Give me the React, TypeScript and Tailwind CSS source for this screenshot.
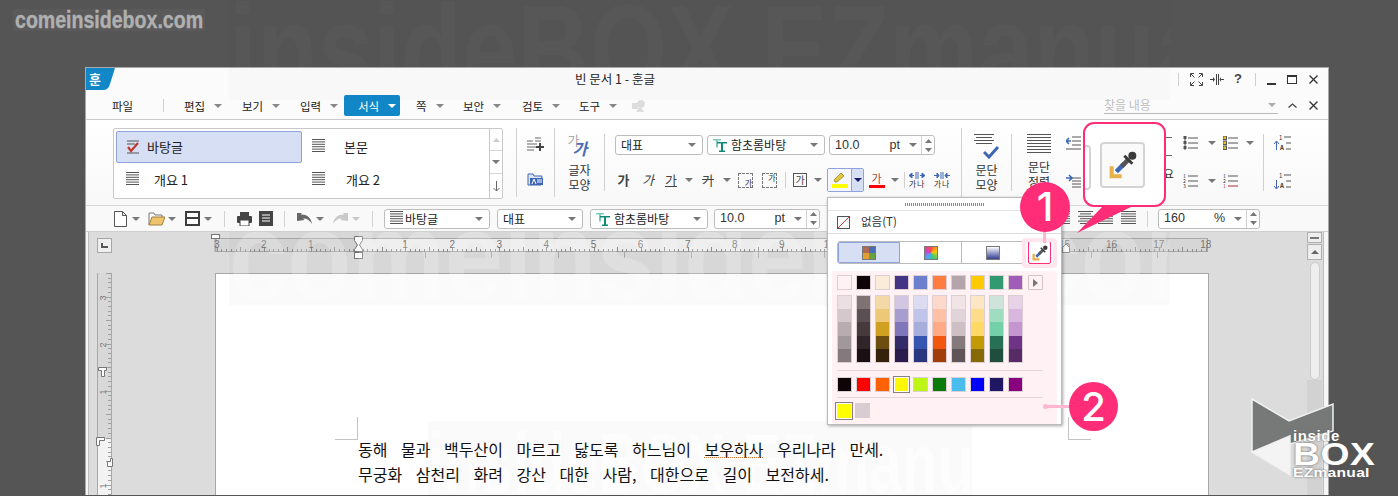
import React from "react";

const Caret = ({ c = "#777777" }: { c?: string }) => (
  <svg width="8" height="4" viewBox="0 0 8 4" className="shrink-0"><path d="M0 0h8L4 4z" fill={c} /></svg>
);
const Slot = ({ w, children }: { w: string; children?: React.ReactNode }) => (
  <div className={`${w} flex shrink-0 items-center justify-center`}>{children}</div>
);
const VSep = ({ h = "h-[16px]", c = "bg-[#d0d0d0]" }: { h?: string; c?: string }) => (
  <div className={`${h} ${c} w-px shrink-0`} />
);
const Lines = ({ w = 14, n = 6, gap = 2.4, c = "#555555", stagger = false }: { w?: number; n?: number; gap?: number; c?: string; stagger?: boolean }) => (
  <svg width={w} height={n * gap + 1} className="shrink-0">
    {Array.from({ length: n }).map((_, i) => (
      <line key={i} x1={stagger && i % 2 ? 2 : 0} x2={stagger && i % 2 ? w - 2 : w} y1={i * gap + 0.5} y2={i * gap + 0.5} stroke={c} strokeWidth="1" />
    ))}
  </svg>
);
const Dropper = ({ s = 24 }: { s?: number }) => (
  <svg width={s} height={s} viewBox="0 0 24 24">
    <path d="M2 13h3v6h6v3H2z" fill="#e6b04a" />
    <line x1="7" y1="17" x2="13" y2="11" stroke="#3e66b4" strokeWidth="3.4" />
    <line x1="11" y1="13" x2="16" y2="8" stroke="#555555" strokeWidth="3.6" />
    <line x1="13" y1="5" x2="19" y2="11" stroke="#3a3a3a" strokeWidth="2.2" />
    <circle cx="19" cy="5" r="3" fill="#3a3a3a" />
  </svg>
);
const FontT = () => (
  <svg width="14" height="14" viewBox="0 0 14 14" className="shrink-0">
    <path d="M0 1h8v1.600H5v7H3v-7H0z" fill="#7fc9b8" />
    <path d="M4 4h10v1.600h-4v6.800h2V14H6v-1.600h2V5.600H4z" fill="#118a78" />
  </svg>
);
const Select = ({ w, children }: { w: string; children: React.ReactNode }) => (
  <div className={`${w} flex h-[20px] shrink-0 items-center rounded-[3px] border border-[#bdbdbd] bg-white pl-[5px] pr-[6px] text-[12px] text-[#222222]`}>
    {children}
    <span className="ml-auto flex"><Caret /></span>
  </div>
);
const SizeBox = ({ w, val, unit }: { w: string; val: string; unit: string }) => (
  <div className={`${w} flex h-[20px] shrink-0 items-center rounded-[3px] border border-[#bdbdbd] bg-white pl-[5px] text-[12.5px] text-[#333333] [font-family:'Liberation_Sans',sans-serif]`}>
    <span>{val}</span>
    <span className="ml-auto">{unit}</span>
    <span className="ml-[9px] flex"><Caret /></span>
    <div className="ml-[4px] flex h-full w-[13px] flex-col items-center justify-center gap-[5px] border-l border-[#d0d0d0]">
      <svg width="7" height="4"><path d="M0 4L3.500 0 7 4z" fill="#777777" /></svg>
      <svg width="7" height="4"><path d="M0 0h7L3.500 4z" fill="#777777" /></svg>
    </div>
  </div>
);
const MenuItem = ({ w, t }: { w: string; t: string }) => (
  <div className={`${w} flex shrink-0 items-center text-[#222222]`}>
    <span>{t}</span>
    <span className="ml-[9px] flex"><Caret c="#888888" /></span>
  </div>
);
const GaStack = ({ a, b }: { a: string; b: string }) => (
  <div className="flex flex-col items-center gap-[3px] text-[12px] leading-[12px] text-[#333333]">
    <span>{a}</span><span>{b}</span>
  </div>
);
const DashedGa = ({ top }: { top?: boolean }) => (
  <div className={`flex h-[15px] w-[15px] border border-dashed border-[#777777] ${top ? "items-start justify-end" : "items-end justify-end"}`}>
    <span className="text-[8px] leading-[8px] text-[#333333]">가</span>
  </div>
);
const SpacingIcon = ({ narrow }: { narrow?: boolean }) => (
  <div className="flex flex-col items-center">
    <svg width="16" height="7" viewBox="0 0 16 7">
      {narrow ? (
        <path d="M0 3.500h3M3 1v5l2-2.500zM13 1v5l-2-2.500zM13 3.500h3M7 0v7M9 0v7" stroke="#3e66b4" fill="#3e66b4" strokeWidth="1" />
      ) : (
        <path d="M0 3.500h5M3 1l-3 2.500 3 2.500zM16 3.500h-5M13 1l3 2.500-3 2.500zM7 0v7M9 0v7" stroke="#3e66b4" fill="#3e66b4" strokeWidth="1" />
      )}
    </svg>
    <span className="mt-[1px] text-[8px] leading-[8px] tracking-[1px] text-[#333333]">가나</span>
  </div>
);

const hSwatches = ["#fff2f5", "#0e0306", "#faecd9", "#443484", "#6b7fce", "#ff7c40", "#b3a5aa", "#ffcb00", "#339970", "#a05cb7"];
const columns = [
  ["#ecdfe3", "#d5c8cc", "#b9acb0", "#a0989b", "#847a7e"],
  ["#7e7275", "#5a4f52", "#463a3d", "#302528", "#1a1013"],
  ["#f4d9a8", "#ecc877", "#d0a020", "#6b4e10", "#35220c"],
  ["#d2c6e2", "#a79dcf", "#8076bb", "#332c68", "#2a1c4c"],
  ["#dcdcf0", "#c0c4e8", "#a6aedc", "#3655b0", "#2a367e"],
  ["#fdd9cb", "#ffc0a6", "#ffa985", "#f0560d", "#a23c0b"],
  ["#f0e4e6", "#e0d4d8", "#ccc0c4", "#847a7c", "#605458"],
  ["#fde6c4", "#fddc8a", "#ffd866", "#c29a05", "#866a08"],
  ["#cee4da", "#a0dcc0", "#74d0a8", "#287055", "#1f4e3e"],
  ["#e8d2e8", "#d9b6df", "#c495d0", "#6f3388", "#582a66"],
];
const stdColors = ["#0e0306", "#ff0000", "#ff6105", "#fff700", "#bdf516", "#0b7a08", "#4abcee", "#0000ff", "#1f1664", "#880080"];

const HRuler = () => {
  const unit = 47.1;
  const ticks = Array.from({ length: 211 }).map((_, i) => i);
  const labels: [string, number][] = [["3", -3], ["2", -2], ["1", -1]];
  for (let i = 1; i <= 18; i++) labels.push([String(i), i]);
  return (
    <svg width="994" height="30" className="shrink-0 overflow-visible" viewBox="0 0 994 30">
      <rect x="0" y="1" width="992" height="13" fill="#d6d6d6" />
      <rect x="143" y="1" width="708" height="13" fill="#f1f1f1" />
      <line x1="0" x2="992" y1="0.500" y2="0.500" stroke="#a8a8a8" />
      <line x1="0" x2="992" y1="13.500" y2="13.500" stroke="#a8a8a8" />
      <line x1="0.500" x2="0.500" y1="0" y2="14" stroke="#a8a8a8" strokeWidth="2" />
      <line x1="992.500" x2="992.500" y1="0" y2="14" stroke="#a8a8a8" />
      {ticks.map((i) => {
        const x = Math.round(143 + (i - 30) * (unit / 10)) + 0.5;
        return <line key={i} x1={x} x2={x} y1={i % 5 === 0 ? 9 : 11} y2="14" stroke="#909090" />;
      })}
      {labels.map(([t, n]) => (
        <text key={t + n} x={143 + n * unit} y="10" textAnchor="middle" fontSize="10" fill="#777777" fontFamily="Liberation Sans, sans-serif">{t}</text>
      ))}
      {Array.from({ length: 12 }).map((_, i) => {
        const x = Math.round(143 + 66.6 * (i + 1)) + 0.5;
        return <line key={i} x1={x} x2={x} y1="14" y2="20" stroke="#a8a8a8" />;
      })}
      <rect x="-3.500" y="-3.500" width="8" height="4" fill="#ffffff" stroke="#777777" />
      <path d="M139.500-1.500h8v4l-3 4.500 3 4.500v2h-8v-2l3-4.500-3-4.500z" fill="#ffffff" stroke="#777777" />
      <rect x="139.500" y="14.500" width="8" height="6" fill="#ffffff" stroke="#777777" />
      <path d="M847.500 18.500v-5l3.500-3.500 3.500 3.500v5z" fill="#ffffff" stroke="#777777" transform="translate(0,-4)" />
    </svg>
  );
};

const VRuler = () => {
  const unit = 47;
  return (
    <svg width="15" height="222" viewBox="0 0 15 222" className="shrink-0 overflow-visible">
      <rect x="1" y="0" width="13" height="166" fill="#d8d8d8" />
      <rect x="1" y="166" width="13" height="56" fill="#f3f3f3" />
      <line x1="0.500" x2="0.500" y1="0" y2="222" stroke="#a8a8a8" />
      <line x1="14.500" x2="14.500" y1="0" y2="222" stroke="#a8a8a8" />
      {Array.from({ length: 48 }).map((_, i) => {
        const y = Math.round(i * (unit / 10)) + 0.5;
        return <line key={i} x1={(i - 25) % 5 === 0 ? 9 : 11} x2="14" y1={y} y2={y} stroke="#a0a0a0" />;
      })}
      {[["3", 25], ["2", 72], ["1", 119], ["1", 213]].map(([t, y]) => (
        <text key={String(y)} x="0" y="0" transform={`translate(9,${y}) rotate(-90)`} textAnchor="middle" fontSize="9" fill="#777777" fontFamily="Liberation Sans, sans-serif">{t}</text>
      ))}
      <path d="M1.500 94.500h8v3h-2v6h-3v-6h-3z" fill="#ffffff" stroke="#777777" />
      <path d="M-0.500 164.500h8v3h-5v5h-3z" fill="#ffffff" stroke="#777777" />
      <path d="M8.500 194.500v-5h3v-3h2v8z" fill="#ffffff" stroke="#777777" transform="translate(2,-1)" />
    </svg>
  );
};

export default function App() {
  return (
    <div className="relative h-[496px] w-[1398px] overflow-hidden bg-[#555555] pl-[85px] pt-[67px] text-[12px] [font-family:'Noto_Sans_CJK_KR','Noto_Sans',sans-serif]">
      {/* window */}
      <div className="flex h-[428px] w-[1244px] flex-col border border-b-0 border-[#a9a9a9] bg-[#fbfbfb]">
        {/* title bar */}
        <div className="flex h-[25px] shrink-0 items-start">
          <svg width="29" height="22" viewBox="0 0 29 22" className="shrink-0">
            <path d="M0 0h29l-5 16q-1.500 6-7 6H0z" fill="#1287c8" />
            <text x="9" y="16" textAnchor="middle" fontSize="13" fontWeight="700" fill="#ffffff">훈</text>
          </svg>
          <span className="ml-[460px] mt-[3px] text-[12.5px] leading-[16px] text-[#222222]">빈 문서 1 - 훈글</span>
          <div className="ml-auto flex items-center pt-[4px]">
            <VSep h="h-[13px]" />
            <Slot w="w-[34px]">
              <svg width="13" height="13" viewBox="0 0 13 13" fill="none" stroke="#444444"><path d="M.5 4V.5H4M9 .5h3.500V4M12.500 9v3.500H9M4 12.500H.5V9M1 1l3.500 3.500M12 1L8.500 4.500M12 12L8.500 8.500M1 12l3.500-3.500" /></svg>
            </Slot>
            <Slot w="w-[8px]">
              <svg width="14" height="11" viewBox="0 0 14 11" className="shrink-0" fill="#444444"><path d="M6 0h1v11H6zM8 0h1v11H8zM0 5h3V3l2 2.500L3 8V6H0zM14 5h-3V3L9.500 5.500 11 8V6h3z" /></svg>
            </Slot>
            <Slot w="w-[34px]"><span className="text-[13px] font-bold leading-[14px] text-[#444444] [font-family:'Liberation_Sans',sans-serif]">?</span></Slot>
            <VSep h="h-[13px]" />
            <Slot w="w-[30px]"><div className="mt-[9px] h-[2px] w-[9px] bg-[#333333]" /></Slot>
            <Slot w="w-[12px]"><div className="h-[9px] w-[10px] shrink-0 border border-t-2 border-[#333333]" /></Slot>
            <Slot w="w-[30px]">
              <svg width="9" height="9" fill="none" stroke="#333333" strokeWidth="1.300"><path d="M.5.5l8 8M8.500.5l-8 8" /></svg>
            </Slot>
          </div>
        </div>

        {/* menu row */}
        <div className="flex h-[27px] shrink-0 items-center border-b border-[#cacaca] pb-[1px] pl-[26px] text-[11.5px] leading-[14px] text-[#222222]">
          <span className="w-[51px] shrink-0">파일</span>
          <VSep h="h-[13px]" />
          <div className="w-[20px] shrink-0" />
          <MenuItem w="w-[58px]" t="편집" />
          <MenuItem w="w-[58px]" t="보기" />
          <MenuItem w="w-[44px]" t="입력" />
          <div className="flex h-[21px] w-[56px] shrink-0 items-center rounded-[2px] bg-[#1287c8] pl-[14px] text-white">
            <span>서식</span><span className="ml-[9px] flex"><Caret c="#ffffff" /></span>
          </div>
          <div className="w-[16px] shrink-0" />
          <MenuItem w="w-[47px]" t="쪽" />
          <MenuItem w="w-[59px]" t="보안" />
          <MenuItem w="w-[57px]" t="검토" />
          <MenuItem w="w-[53px]" t="도구" />
          <svg width="14" height="12" viewBox="0 0 14 12" className="shrink-0" fill="#dddddd"><path d="M0 3l6 0v6H0zM9 0a4 4 0 1 1-.1 0zM4 12l4-6 4 6z" /></svg>
          <div className="ml-[458px] flex h-[17px] w-[174px] shrink-0 items-center border-b border-[#bbbbbb] text-[12px] text-[#bfbfbf]">
            <span>찾을 내용</span>
            <span className="ml-auto mr-[2px] flex"><Caret c="#aaaaaa" /></span>
          </div>
          <Slot w="w-[28px]">
            <svg width="9" height="5" fill="none" stroke="#444444" strokeWidth="1.300"><path d="M.5 4.500L4.500 1l4 3.500" /></svg>
          </Slot>
          <Slot w="w-[14px]">
            <svg width="9" height="9" className="shrink-0" fill="none" stroke="#333333" strokeWidth="1.300"><path d="M.5.5l8 8M8.500.5l-8 8" /></svg>
          </Slot>
        </div>

        {/* ribbon */}
        <div className="relative z-10 flex h-[86px] shrink-0 items-stretch border-b border-[#d6d6d6] bg-gradient-to-b from-white to-[#f8f8f8] pl-[27px]">
          {/* style gallery */}
          <div className="mt-[8px] flex h-[71px] w-[390px] shrink-0 rounded-[2px] border border-[#c8c8c8] bg-white">
            <div className="grid w-[376px] grid-cols-[189px_1fr] grid-rows-[32px_33px] p-[2px] text-[13px] leading-[16px] text-[#222222]">
              <div className="flex w-[186px] items-center rounded-[2px] border border-[#8ea2dc] bg-[#d6dff3] pl-[9px]">
                <svg width="14" height="14" viewBox="0 0 14 14" className="shrink-0" fill="none"><path d="M1 1h12M1 4h8M1 13h12" stroke="#555555" /><path d="M2 7l3 4 7-8" stroke="#c0392b" strokeWidth="2.200" /></svg>
                <span className="ml-[7px]">바탕글</span>
              </div>
              <div className="flex items-center pl-[7px]"><Lines w={13} n={6} /><span className="ml-[19px]">본문</span></div>
              <div className="flex items-center pl-[10px]"><Lines w={13} n={6} /><span className="ml-[15px]">개요 1</span></div>
              <div className="flex items-center pl-[7px]"><Lines w={13} n={6} /><span className="ml-[21px]">개요 2</span></div>
            </div>
            <div className="flex w-[13px] flex-col border-l border-[#c8c8c8]">
              <div className="flex h-[22px] items-center justify-center border-b border-[#d6d6d6]"><svg width="7" height="4"><path d="M0 4L3.500 0 7 4z" fill="#cccccc" /></svg></div>
              <div className="flex h-[23px] items-center justify-center border-b border-[#d6d6d6]"><Caret /></div>
              <div className="flex flex-1 items-center justify-center">
                <svg width="7" height="11" fill="none" stroke="#666666"><path d="M3.500 0v10M.5 7l3 3 3-3" /></svg>
              </div>
            </div>
          </div>
          <div className="ml-[13px] mt-[8px] h-[69px] w-px shrink-0 bg-[#d0d0d0]" />

          {/* new-style icons */}
          <div className="flex w-[37px] shrink-0 flex-col items-center pr-[1px] pt-[16px]">
            <svg width="17" height="16" viewBox="0 0 17 16" fill="none" stroke="#666666">
              <path d="M0 5h6M0 8h10M0 11h10M0 14h7M8 2h6M8 5h6" />
              <path d="M9 11h8M13 7v8" stroke="#444444" strokeWidth="2" />
            </svg>
            <svg width="17" height="13" viewBox="0 0 17 13" className="mt-[21px]"><path d="M1 12V1h5l1 2h8l-1 9z" fill="#dde5f5" stroke="#3e66b4" /><rect x="3" y="5" width="13" height="7" fill="#3e66b4" /><path d="M5 11l2-5 2 5M10 7h5M10 9h5" stroke="#ffffff" fill="none" /></svg>
          </div>
          <div className="mt-[8px] h-[69px] w-px shrink-0 bg-[#d0d0d0]" />

          {/* char shape */}
          <div className="flex w-[49px] shrink-0 flex-col items-center pt-[13px]">
            <div className="relative h-[24px] w-[24px] shrink-0">
              <span className="absolute left-0 top-0 text-[13px] leading-[13px] text-[#aaaaaa]">가</span>
              <span className="absolute left-[5px] top-[7px] text-[16px] font-bold italic leading-[16px] text-[#4a6cb6]">가</span>
            </div>
            <div className="mt-[7px]"><GaStack a="글자" b="모양" /></div>
          </div>
          <div className="mt-[14px] h-[57px] w-px shrink-0 bg-[#d0d0d0]" />

          {/* controls */}
          <div className="flex w-[356px] shrink-0 flex-col pt-[15px]">
            <div className="flex items-center pl-[10px]">
              <Select w="w-[88px]">대표</Select>
              <Select w="w-[118px] ml-[4px]"><FontT /><span className="ml-[4px]">함초롬바탕</span></Select>
              <SizeBox w="w-[106px] ml-[4px]" val="10.0" unit="pt" />
            </div>
            <div className="mt-[13px] flex h-[24px] items-center text-[13px] text-[#444444]">
              <div className="w-[6px] shrink-0" />
              <Slot w="w-[25px]"><b className="font-bold">가</b></Slot>
              <Slot w="w-[24px]"><i>가</i></Slot>
              <Slot w="w-[22px]"><span className="underline">가</span></Slot>
              <Slot w="w-[14px]"><Caret /></Slot>
              <Slot w="w-[24px]"><span className="line-through">가</span></Slot>
              <Slot w="w-[14px]"><Caret /></Slot>
              <Slot w="w-[23px]"><DashedGa /></Slot>
              <Slot w="w-[24px]"><DashedGa top /></Slot>
              <Slot w="w-[8px]"><VSep h="h-[16px]" /></Slot>
              <Slot w="w-[22px]"><div className="flex h-[14px] w-[14px] items-center justify-center border border-[#555555] text-[10px] leading-[10px]">가</div></Slot>
              <Slot w="w-[14px]"><Caret /></Slot>
              <div className="ml-[2px] flex h-[24px] w-[37px] shrink-0 overflow-hidden rounded-[2px] border border-[#8ea2dc]">
                <div className="flex w-[23px] flex-col items-center justify-center bg-[#f5f7fc]">
                  <svg width="15" height="11" viewBox="0 0 15 11"><path d="M3 9l-1-2 7-7 3 3-7 6z" fill="#e0c83a" stroke="#8a7a20" strokeWidth=".7" /></svg>
                  <div className="h-[4px] w-[16px] bg-[#ffff00]" />
                </div>
                <div className="flex flex-1 items-center justify-center border-l border-[#8ea2dc] bg-[#d6dff3]"><Caret c="#1f1664" /></div>
              </div>
              <Slot w="w-[25px]">
                <div className="flex flex-col items-center">
                  <span className="text-[11px] leading-[11px] text-[#a84a3a]">가</span>
                  <div className="mt-[1px] h-[3px] w-[16px] bg-[#ff0000]" />
                </div>
              </Slot>
              <Slot w="w-[11px]"><Caret /></Slot>
              <Slot w="w-[8px]"><VSep h="h-[16px]" /></Slot>
              <Slot w="w-[18px]"><SpacingIcon /></Slot>
              <div className="w-[4px] shrink-0" />
              <Slot w="w-[24px]"><SpacingIcon narrow /></Slot>
            </div>
          </div>
          <div className="mt-[8px] h-[69px] w-px shrink-0 bg-[#d0d0d0]" />

          {/* paragraph shape */}
          <div className="flex w-[49px] shrink-0 flex-col items-center pt-[14px]">
            <div className="relative h-[25px] w-[26px] shrink-0">
              <div className="absolute left-0 top-0"><Lines w={20} n={4} gap={3} stagger /></div>
              <svg width="17" height="13" className="absolute bottom-0 right-0" fill="none" stroke="#3e66b4" strokeWidth="3"><path d="M1 6l5 5 9-10" /></svg>
            </div>
            <div className="mt-[5px]"><GaStack a="문단" b="모양" /></div>
          </div>
          <div className="mt-[14px] h-[57px] w-px shrink-0 bg-[#d0d0d0]" />
          <div className="flex w-[54px] shrink-0 flex-col items-center pt-[14px]">
            <Lines w={24} n={7} gap={3} />
            <div className="mt-[5px]"><GaStack a="문단" b="정렬" /></div>
          </div>
          <div className="flex w-[14px] shrink-0 flex-col items-center pt-[16px]">
            <svg width="15" height="14" className="shrink-0" fill="none" stroke="#555555"><path d="M6 1h9M6 5h9M6 9h9M0 13h15" /><path d="M0 5h5M3 2L0 5l3 3" stroke="#3e66b4" strokeWidth="1.500" /></svg>
            <svg width="15" height="14" className="mt-[24px] shrink-0" fill="none" stroke="#555555"><path d="M6 4h9M6 7h9M6 10h9M6 13h9" /><path d="M0 4h6M3 1l3 3-3 3" stroke="#3e66b4" strokeWidth="1.500" /></svg>
          </div>

          {/* outline column (mostly behind the callout) */}
          <div className="flex w-[95px] shrink-0 flex-col items-end pr-[3px] pt-[17px] text-[12px] leading-[12px] text-[#333333]">
            <Lines w={11} n={2} gap={18} c="#666666" />
            <span className="mr-[-2px] mt-[-6px]">개요</span>
          </div>

          {/* list icons */}
          <div className="flex w-[88px] shrink-0 flex-col pt-[16px]">
            <div className="flex h-[14px] items-center pl-[8px]">
              <svg width="15" height="14" className="shrink-0" fill="none" stroke="#555555"><path d="M5 2h10M5 7h10M5 12h10" /><path d="M1 0h2v3H1zM1 5h2v3H1zM1 10h2v3H1z" fill="#555555" /></svg>
              <span className="ml-[10px] flex"><Caret /></span>
              <svg width="15" height="14" className="ml-[7px] shrink-0" fill="none" stroke="#555555"><path d="M5 2h10M5 7h10M5 12h10" /><rect x="0" y="0" width="3.500" height="3.500" fill="#e6c020" /><rect x="0" y="5" width="3.500" height="3.500" fill="#e6c020" /><rect x="0" y="10" width="3.500" height="3.500" fill="#e6c020" /></svg>
              <span className="ml-[8px] flex"><Caret /></span>
            </div>
            <div className="mt-[24px] flex h-[14px] items-center pl-[8px]">
              <svg width="15" height="14" className="shrink-0" fill="none" stroke="#555555"><path d="M5 2h10M5 7h10M5 12h10" /><text x="0" y="4" fontSize="5" fill="#333333" stroke="none">1</text><text x="0" y="9" fontSize="5" fill="#333333" stroke="none">2</text><text x="0" y="14" fontSize="5" fill="#333333" stroke="none">3</text></svg>
              <span className="ml-[10px] flex"><Caret /></span>
              <svg width="15" height="14" className="ml-[7px] shrink-0" fill="none" stroke="#555555"><path d="M5 2h10M5 7h10" /><path d="M5 12h10" stroke="#a83030" /><text x="0" y="4" fontSize="5" fill="#333333" stroke="none">1</text><text x="0" y="9" fontSize="5" fill="#333333" stroke="none">2</text><text x="0" y="14" fontSize="5" fill="#a83030" stroke="none">1</text></svg>
            </div>
          </div>
          <div className="mt-[14px] h-[57px] w-px shrink-0 bg-[#d0d0d0]" />
          <div className="flex w-[36px] shrink-0 flex-col items-center pt-[14px]">
            <svg width="17" height="17" className="shrink-0" fill="none" stroke="#555555"><path d="M10 3h7M12 9h5M12 15h5" /><text x="5" y="6" fontSize="6" fill="#333333" stroke="none">1</text><text x="6" y="16" fontSize="6" fontWeight="700" fill="#333333" stroke="none">A</text><path d="M2.500 16V8M0 10l2.500-3 2.500 3" stroke="#3e66b4" /></svg>
            <svg width="17" height="17" className="mt-[21px] shrink-0" fill="none" stroke="#555555"><path d="M10 3h7M12 9h5M12 15h5" /><text x="5" y="6" fontSize="6" fill="#333333" stroke="none">1</text><text x="6" y="16" fontSize="6" fontWeight="700" fill="#333333" stroke="none">A</text><path d="M2.500 8v8M0 14l2.500 3 2.500-3" stroke="#3e66b4" /></svg>
          </div>
        </div>

        {/* toolbar */}
        <div className="relative z-10 flex h-[26px] shrink-0 items-center border-b border-[#cfcfcf] bg-[#f9f9f9] pl-[27px]">
          <Slot w="w-[14px]">
            <svg width="13" height="16" viewBox="0 0 13 16" fill="#ffffff" stroke="#555555" className="shrink-0"><path d="M.5.5h8l4 4v11H.5zM8.500.5v4h4" /></svg>
          </Slot>
          <Slot w="w-[18px]"><Caret /></Slot>
          <Slot w="w-[22px]">
            <svg width="17" height="14" viewBox="0 0 17 14" className="shrink-0"><path d="M1 13V1h5l1 2h7v2" fill="none" stroke="#777777" /><path d="M4 5h13l-3 8H1z" fill="#eec36b" stroke="#a08040" /></svg>
          </Slot>
          <Slot w="w-[10px]"><Caret /></Slot>
          <Slot w="w-[30px]">
            <svg width="15" height="15" viewBox="0 0 15 15" className="shrink-0"><rect width="15" height="15" fill="#3d3d3d" /><rect x="2" y="2" width="11" height="4" fill="#ffffff" /><rect x="2" y="8" width="11" height="5" fill="#ffffff" /></svg>
          </Slot>
          <Slot w="w-[2px]"><Caret /></Slot>
          <Slot w="w-[30px]"><VSep /></Slot>
          <Slot w="w-[10px]">
            <svg width="15" height="14" viewBox="0 0 15 14" className="shrink-0"><rect x="3" y="0" width="9" height="4" fill="#444444" /><rect x="0" y="4" width="15" height="7" rx="1" fill="#444444" /><rect x="3" y="8" width="9" height="6" fill="#ffffff" stroke="#444444" /></svg>
          </Slot>
          <Slot w="w-[34px]">
            <svg width="14" height="15" viewBox="0 0 14 15" className="shrink-0"><rect width="14" height="15" fill="#444444" /><path d="M3 4h8M3 7h8M3 10h8" stroke="#ffffff" /></svg>
          </Slot>
          <Slot w="w-[2px]"><VSep /></Slot>
          <div className="w-[7px] shrink-0" />
          <Slot w="w-[24px]">
            <svg width="15" height="12" viewBox="0 0 15 12" className="shrink-0" fill="#666666"><path d="M0 0l5 0-1.500 1.500C9 1 14 4 15 11c-2-4-6-6-9-5.500L7.500 7 0 8z" /></svg>
          </Slot>
          <Slot w="w-[8px]"><Caret /></Slot>
          <div className="w-[4px] shrink-0" />
          <Slot w="w-[24px]">
            <svg width="15" height="12" viewBox="0 0 15 12" className="shrink-0" fill="#c9c9c9"><path d="M15 0l-5 0 1.500 1.500C6 1 1 4 0 11c2-4 6-6 9-5.500L7.500 7 15 8z" /></svg>
          </Slot>
          <Slot w="w-[8px]"><Caret c="#c8c8c8" /></Slot>
          <Slot w="w-[24px]"><VSep /></Slot>
          <Select w="w-[106px]"><Lines w={13} n={6} /><span className="ml-[2px]">바탕글</span></Select>
          <Select w="w-[86px] ml-[7px]">대표</Select>
          <Select w="w-[118px] ml-[7px]"><FontT /><span className="ml-[4px]">함초롬바탕</span></Select>
          <SizeBox w="w-[106px] ml-[6px]" val="10.0" unit="pt" />
          <div className="w-[232px] shrink-0" />
          <Slot w="w-[22px]"><Lines w={14} n={6} /></Slot>
          <Slot w="w-[22px]"><Lines w={15} n={6} stagger /></Slot>
          <Slot w="w-[18px]"><Lines w={15} n={6} /></Slot>
          <Slot w="w-[28px]"><Lines w={15} n={6} /></Slot>
          <Slot w="w-[10px]"><VSep /></Slot>
          <SizeBox w="w-[102px] ml-[6px]" val="160" unit="%" />
        </div>

        {/* workspace */}
        <div className="flex min-h-0 flex-1 overflow-hidden">
          <div className="w-[3px] shrink-0 border-r border-[#bdbdbd] bg-[#f7f7f7]" />
          <div className="flex min-w-0 flex-1 flex-col bg-[#dcdcdc]">
            <div className="flex h-[41px] shrink-0 items-start pl-[8px] pt-[6px]">
              <div className="flex h-[15px] w-[15px] shrink-0 items-center justify-center border border-[#a8a8a8] bg-[#eeeeee]">
                <div className="h-[5px] w-[7px] border-b-2 border-l-2 border-[#555555]" />
              </div>
              <div className="ml-[103px] flex"><HRuler /></div>
            </div>
            <div className="flex min-h-0 flex-1 pl-[8px]">
              <VRuler />
              <div className="relative ml-[103px] w-[994px] shrink-0 border-l border-r border-t border-[#a8a8a8] bg-white pl-[142px] pt-[163px] text-[16px] leading-[25px] text-[#111111] [word-spacing:10px]">
                <div className="absolute left-[119px] top-[143px] h-[23px] w-[23px] border-b border-r border-[#c4c4c4]" />
                <div className="absolute left-[852px] top-[143px] h-[23px] w-[23px] border-b border-l border-[#c4c4c4]" />
                <p className="relative z-10 whitespace-nowrap">동해 물과 백두산이 마르고 닳도록 하느님이 <span className="underline decoration-[#d87020] decoration-dotted decoration-1">보우하사</span> 우리나라 만세.</p>
                <p className="relative z-10 whitespace-nowrap">무궁화 삼천리 화려 강산 대한 사람, 대한으로 길이 보전하세.</p>
              </div>
            </div>
          </div>
          {/* vertical scrollbar */}
          <div className="flex w-[16px] shrink-0 flex-col items-center bg-[#dcdcdc] pr-[1px]">
            <div className="flex h-[11px] w-[15px] shrink-0 items-center justify-center border border-[#b0b0b0] bg-[#eeeeee]"><div className="h-[2px] w-[9px] bg-[#777777]" /></div>
            <div className="mt-[1px] flex h-[16px] w-[15px] shrink-0 items-center justify-center border border-[#b0b0b0] bg-[#eeeeee]"><svg width="8" height="4"><path d="M0 4L4 0l4 4z" fill="#666666" /></svg></div>
            <div className="mt-[2px] h-[118px] w-[10px] shrink-0 rounded-[5px] border border-[#cccccc] bg-[#eeeeee]" />
            <div className="w-full flex-1 bg-[#d2d2d2]" />
          </div>
          <div className="w-[5px] shrink-0 border-l border-[#bdbdbd] bg-[#f7f7f7]" />
        </div>
      </div>

      {/* faint watermark */}
      <div className="pointer-events-none absolute left-[229px] top-0 h-[100px] w-[941px] overflow-hidden bg-black/[0.012] text-[128px] font-bold leading-[100px] text-white/[0.02] [font-family:'Liberation_Sans',sans-serif]">
        <span className="block origin-left scale-x-[0.78] whitespace-nowrap">insideBOX EZmanual</span>
      </div>
      <div className="pointer-events-none absolute left-[229px] top-[190px] h-[115px] w-[941px] overflow-hidden bg-black/[0.02] pt-[8px] text-[128px] font-bold leading-[115px] text-white/20 [font-family:'Liberation_Sans',sans-serif]">
        <span className="block origin-left scale-x-[0.82] whitespace-nowrap">comeinsidebox.com</span>
      </div>
      <div className="pointer-events-none absolute left-[428px] top-[421px] h-[76px] w-[544px] overflow-hidden bg-black/[0.02] text-[84px] font-bold leading-[84px] text-white/50 [font-family:'Liberation_Sans',sans-serif]">
        <span className="block origin-left scale-x-[0.7] whitespace-nowrap">insideBOX EZmanual</span>
      </div>

      {/* site label */}
      <div className="absolute left-[13px] top-[9px] h-[22px] w-[192px] bg-white/[0.03] pl-[2px] text-[24px] font-bold leading-[22px] text-[#b0b0b0] [-webkit-text-stroke:0.4px_#b0b0b0] [font-family:'Liberation_Sans',sans-serif]">
        <span className="block origin-left scale-x-[0.815] whitespace-nowrap">comeinsidebox.com</span>
      </div>

      {/* everything that floats over the window */}
      <div className="pointer-events-none absolute inset-0 z-20">
        {/* colour dropdown */}
        <div className="absolute left-[827px] top-[197px] flex h-[228px] w-[235px] flex-col border border-[#bbbbbb] bg-white shadow-[1px_1px_3px_rgba(0,0,0,0.35)]">
          <div className="flex h-[12px] shrink-0 items-center justify-center">
            <div className="h-[3px] w-[80px] bg-[repeating-linear-gradient(90deg,#888888_0,#888888_1px,transparent_1px,transparent_2px)]" />
          </div>
          <div className="flex h-[23px] shrink-0 items-center border-t border-[#e4e4e4] pl-[9px] text-[11.5px] text-[#333333]">
            <svg width="13" height="13" className="shrink-0" fill="none"><rect x=".5" y=".5" width="12" height="12" stroke="#555555" /><path d="M1 12L12 1" stroke="#d23c3c" /></svg>
            <span className="ml-[11px]">없음(T)</span>
          </div>
          <div className="flex h-[38px] shrink-0 items-center border-t border-[#dcdcdc] pl-[9px]">
            <div className="flex h-[23px] w-[187px] shrink-0 overflow-hidden rounded-[3px] border border-[#bbbbbb]">
              <div className="flex w-[62px] items-center justify-center border border-[#8ea2dc] bg-[#d6dff3]">
                <svg width="12" height="12" viewBox="0 0 12 12" className="shrink-0 outline outline-1 outline-[#777777]"><rect width="6" height="6" fill="#b06a50" /><rect x="6" width="6" height="6" fill="#4a6cb6" /><rect y="6" width="6" height="6" fill="#e0a030" /><rect x="6" y="6" width="6" height="6" fill="#6aa040" /></svg>
              </div>
              <div className="flex w-[62px] items-center justify-center border-r border-[#bbbbbb]">
                <div className="h-[12px] w-[12px] bg-[conic-gradient(#ff4a4a,#ffcc00,#44cc66,#44aaff,#cc44cc,#ff4a4a)] outline outline-1 outline-[#777777]" />
              </div>
              <div className="flex flex-1 items-center justify-center">
                <div className="h-[12px] w-[12px] bg-gradient-to-b from-[#ffffff] to-[#3a3f90] outline outline-1 outline-[#777777]" />
              </div>
            </div>
            <div className="ml-[4px] flex h-[23px] w-[23px] shrink-0 items-center justify-center rounded-[2px] border border-[#ff2d78] bg-white">
              <Dropper s={18} />
            </div>
          </div>
          <div className="mx-[4px] flex flex-1 flex-col rounded-[2px] bg-[#fff1f4] pl-[5px] pt-[4px]">
            <div className="flex h-[16px] shrink-0 gap-[4px]">
              {hSwatches.map((c) => <div key={c} className="h-[15px] w-[15px] shrink-0 border border-[#dccfd3]" style={{ backgroundColor: c }} />)}
              <div className="ml-[1px] flex h-[15px] w-[15px] shrink-0 items-center justify-center rounded-[1px] border border-[#cfc4c8]"><svg width="5" height="8"><path d="M0 0l5 4-5 4z" fill="#777777" /></svg></div>
            </div>
            <div className="mt-[4px] flex h-[68px] shrink-0 gap-[4px]">
              {columns.map((col, i) => (
                <div key={i} className="flex w-[15px] shrink-0 flex-col border border-[#dccfd3]">
                  {col.map((c) => <div key={c} className="flex-1" style={{ backgroundColor: c }} />)}
                </div>
              ))}
            </div>
            <div className="mr-[14px] mt-[7px] h-px shrink-0 bg-[#e6d6da]" />
            <div className="mt-[6px] flex h-[15px] shrink-0 gap-[4px]">
              {stdColors.map((c, i) => (
                <div key={c} className={`h-[15px] w-[15px] shrink-0 border ${i === 3 ? "border-white outline outline-1 outline-[#8a7e82]" : "border-[#dccfd3]"}`} style={{ backgroundColor: c }} />
              ))}
            </div>
            <div className="mr-[14px] mt-[5px] h-px shrink-0 bg-[#e6d6da]" />
            <div className="-ml-[1px] mt-[5px] flex gap-[3px]">
              <div className="h-[16px] w-[16px] shrink-0 border border-white bg-[#ffff00] outline outline-1 outline-[#8a7e82]" />
              <div className="h-[15px] w-[15px] shrink-0 bg-[#d9cdd1]" />
            </div>
          </div>
        </div>

        {/* pink highlight behind eyedropper */}
        <div className="absolute left-[1022px] top-[238px] h-[30px] w-[35px] rounded-[4px] border-[4px] border-[#ffe6ee]" />
        <div className="absolute left-[1043px] top-[225px] h-[18px] w-[3px] bg-[#ffb6d0]" />
        <div className="absolute left-[1043px] top-[404px] h-[5px] w-[5px] rounded-full bg-[#ffb6d0]" />
        <div className="absolute left-[1047px] top-[405px] h-[3px] w-[25px] bg-[#ffb6d0]" />

        {/* callout tail */}
        <svg width="60" height="32" viewBox="0 0 60 32" className="absolute left-[1075px] top-[203px]">
          <path d="M2 30L28 3h30z" fill="#ff2d78" />
        </svg>

        {/* zoomed button callout */}
        <div className="absolute left-[1083px] top-[122px] flex h-[85px] w-[83px] items-center overflow-hidden rounded-[11px] border-[2px] border-[#ff2d78] bg-white pl-[15px]">
          <div className="absolute left-[-34px] top-[21px] h-[45px] w-[40px] rounded-[4px] border-[2px] border-[#d4d4d4]" />
          <div className="flex h-[46px] w-[45px] shrink-0 items-center justify-center rounded-[4px] border-[2px] border-[#d4d4d4] bg-[#fafafa]">
            <Dropper s={32} />
          </div>
        </div>

        {/* numbered markers */}
        <div className="absolute left-[1020px] top-[182px] flex h-[50px] w-[50px] items-center justify-center rounded-full bg-[#ff2d78] text-[40px] font-medium leading-[40px] text-white [font-family:'Inter',sans-serif]">1</div>
        <div className="absolute left-[1069px] top-[382px] flex h-[49px] w-[49px] items-center justify-center rounded-full bg-[#ff2d78] text-[40px] font-medium leading-[40px] text-white [font-family:'Inter',sans-serif]">2</div>

        {/* logo */}
        <svg width="90" height="82" viewBox="0 0 90 82" className="absolute left-[1250px] top-[397px]">
          <path d="M2 2L39 24 83 7v27L40 47 2 55z" fill="#777978" stroke="#f0f0f0" strokeWidth="1.500" />
          <path d="M2 55L40 39v39z" fill="#f4f4f4" stroke="#f0f0f0" strokeWidth="1.500" />
        </svg>
        <div className="absolute left-[1293px] top-[429px] flex w-[84px] flex-col text-white [font-family:'Liberation_Sans',sans-serif] [text-shadow:0_0_2px_#555555]">
          <span className="text-[15px] font-bold leading-[14px] tracking-[.6px]">inside</span>
          <span className="block origin-left scale-x-[1.2] whitespace-nowrap text-[31px] font-bold leading-[24px] tracking-[.5px]">BOX</span>
          <span className="block origin-left scale-x-[1.25] whitespace-nowrap text-[12.5px] font-bold leading-[12px] tracking-[.2px]">EZmanual</span>
        </div>
      </div>
    </div>
  );
}
